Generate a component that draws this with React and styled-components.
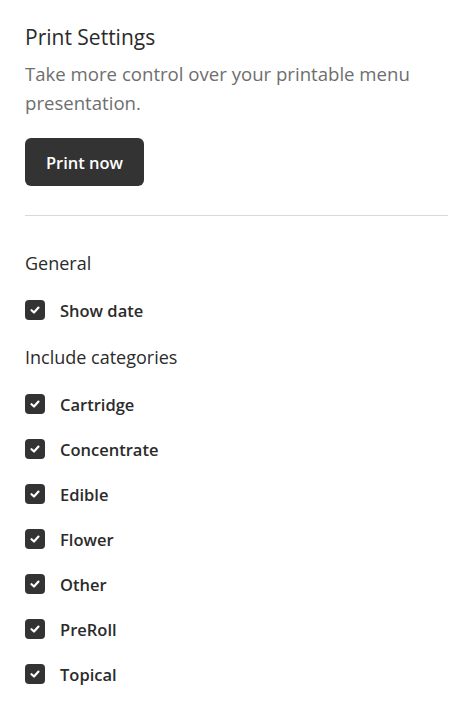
import styled, { createGlobalStyle } from 'styled-components'

const GlobalStyle = createGlobalStyle`
    body {
        margin: 0;
        background: #fff;
        font-family: "Open Sans", "Noto Sans", sans-serif;
    }
`

const categorias = ['Cartridge', 'Concentrate', 'Edible', 'Flower', 'Other', 'PreRoll', 'Topical']

function Check({ label }) {
    return (
        <Linha>
            <Caixa>
                <svg width="12" height="12" viewBox="0 0 12 12">
                    <path d="M2.5 6.2 L5 8.5 L9.5 3.6" fill="none" stroke="#fff" strokeWidth="2.2" strokeLinecap="round" strokeLinejoin="round" />
                </svg>
            </Caixa>
            <Label>{label}</Label>
        </Linha>
    )
}

export default function App() {
    return (
        <>
            <GlobalStyle />
            <Wrapper>
                <Titulo>Print Settings</Titulo>
                <Sub>Take more control over your printable menu presentation.</Sub>
                <Botao>Print now</Botao>
                <Divisor />
                <Secao>General</Secao>
                <Check label="Show date" />
                <Secao>Include categories</Secao>
                {categorias.map((c) => (
                    <Check key={c} label={c} />
                ))}
            </Wrapper>
        </>
    )
}

const Wrapper = styled.div`
    display: flex;
    flex-direction: column;
    align-items: flex-start;
    padding: 22px 20px 20px 25px;
`
const Titulo = styled.h2`
    margin: 0;
    font-size: 21px;
    font-weight: 400;
    color: #2b2b2b;
    line-height: 30px;
`
const Sub = styled.p`
    margin: 7px 0 0;
    font-size: 18.6px;
    color: #6e6e6e;
    line-height: 29px;
    max-width: 420px;
`
const Botao = styled.button`
    margin-top: 21px;
    width: 119px;
    height: 48px;
    border: none;
    border-radius: 6px;
    background: #333;
    color: #fff;
    font-family: inherit;
    font-size: 16.5px;
    font-weight: 600;
    cursor: pointer;
`
const Divisor = styled.hr`
    align-self: stretch;
    margin: 29px 0 0;
    border: none;
    border-top: 1px solid #d8d9de;
`
const Secao = styled.div`
    margin-top: 34px;
    font-size: 18px;
    color: #2b2b2b;
    line-height: 26px;
    & + div {
        margin-top: 21px;
    }
`
const Linha = styled.div`
    display: flex;
    align-items: center;
    gap: 15px;
    height: 26px;
    & + & {
        margin-top: 19px;
    }
    & + ${Secao} {
        margin-top: 21px;
    }
`
const Caixa = styled.span`
    width: 20px;
    height: 20px;
    border-radius: 4px;
    background: #333;
    display: flex;
    align-items: center;
    justify-content: center;
`
const Label = styled.span`
    font-size: 16.5px;
    font-weight: 600;
    color: #2b2b2b;
`
